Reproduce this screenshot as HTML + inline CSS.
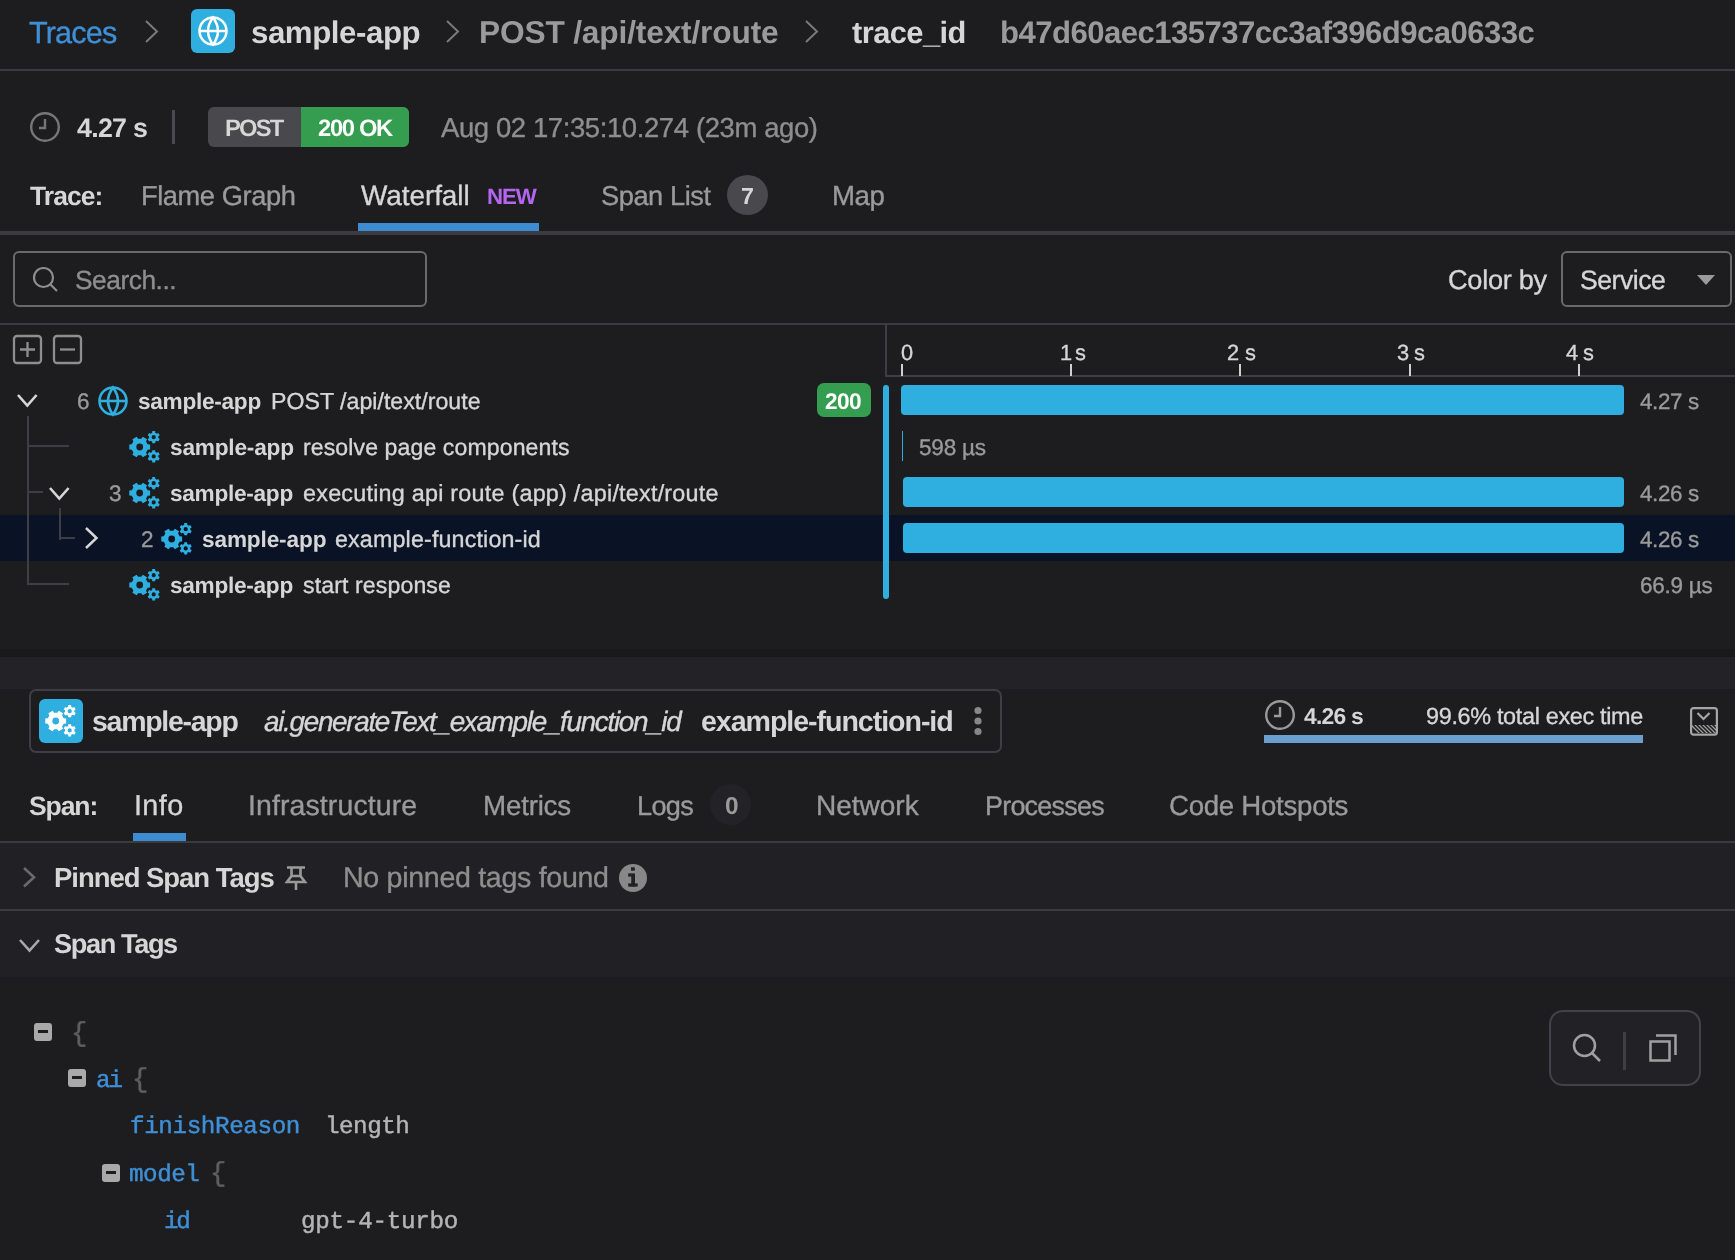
<!DOCTYPE html>
<html><head><meta charset="utf-8"><style>
html,body{margin:0;padding:0;}
body{width:1735px;height:1260px;background:#1d1d20;position:relative;overflow:hidden;font-family:"Liberation Sans",sans-serif;}
.t{position:absolute;white-space:nowrap;will-change:transform;text-rendering:geometricPrecision;}
svg{overflow:visible}
</style></head><body>
<div class="t" style="left:29.00px;top:17.80px;font:normal 400 30.64px/30.64px 'Liberation Sans';color:#3f8fd6;letter-spacing:-0.850px;-webkit-text-stroke:0.35px currentColor">Traces</div>
<svg style="position:absolute;left:144px;top:19px;" width="15" height="25" viewBox="0 0 15 25"><path d="M2,2 L13,12.5 L2,23" fill="none" stroke="#7a7a7a" stroke-width="2"/></svg>
<div style="position:absolute;left:191px;top:9px;width:44px;height:44px;background:#2eafe0;border-radius:6px"></div>
<svg style="position:absolute;left:191px;top:9px;" width="44" height="44" viewBox="0 0 44 44"><g fill="none" stroke="#fff" stroke-width="2.5"><circle cx="22" cy="22" r="13.5"/><path d="M22,8.5 Q12,22 22,35.5 Q32,22 22,8.5Z"/><line x1="8.5" y1="22" x2="35.5" y2="22"/></g></svg>
<div class="t" style="left:251.00px;top:17.21px;font:normal 700 31.26px/31.26px 'Liberation Sans';color:#d6d6d6;letter-spacing:-0.450px">sample-app</div>
<svg style="position:absolute;left:445px;top:19px;" width="15" height="25" viewBox="0 0 15 25"><path d="M2,2 L13,12.5 L2,23" fill="none" stroke="#7a7a7a" stroke-width="2"/></svg>
<div class="t" style="left:478.70px;top:16.90px;font:normal 700 31.70px/31.70px 'Liberation Sans';color:#9a9a9a;letter-spacing:-0.168px">POST /api/text/route</div>
<svg style="position:absolute;left:804px;top:19px;" width="15" height="25" viewBox="0 0 15 25"><path d="M2,2 L13,12.5 L2,23" fill="none" stroke="#7a7a7a" stroke-width="2"/></svg>
<div class="t" style="left:852.00px;top:17.92px;font:normal 700 30.85px/30.85px 'Liberation Sans';color:#d6d6d6;letter-spacing:-0.571px">trace_id</div>
<div class="t" style="left:1000.00px;top:16.91px;font:normal 700 31.13px/31.13px 'Liberation Sans';color:#9a9a9a;letter-spacing:-0.556px">b47d60aec135737cc3af396d9ca0633c</div>
<div style="position:absolute;left:0px;top:69px;width:1735px;height:2px;background:#3b3b3f;"></div>
<svg style="position:absolute;left:29px;top:111px;" width="32" height="32" viewBox="0 0 32 32"><g fill="none" stroke="#777777" stroke-width="2.4"><circle cx="16" cy="16" r="13.8"/><path d="M16,8 V17 H10"/></g></svg>
<div class="t" style="left:77.00px;top:115.40px;font:normal 700 26.83px/26.83px 'Liberation Sans';color:#d6d6d6;letter-spacing:-0.740px">4.27 s</div>
<div style="position:absolute;left:172px;top:110px;width:3px;height:34px;background:#4a4a4e;"></div>
<div style="position:absolute;left:208px;top:107px;width:201px;height:40px;background:#48484d;border-radius:6px"></div>
<div style="position:absolute;left:301px;top:107px;width:108px;height:40px;background:#359d50;border-radius:0 6px 6px 0"></div>
<div class="t" style="left:225.30px;top:117.21px;font:normal 700 23.75px/23.75px 'Liberation Sans';color:#d6d6d6;letter-spacing:-1.817px">POST</div>
<div class="t" style="left:317.70px;top:117.21px;font:normal 700 23.76px/23.76px 'Liberation Sans';color:#ffffff;letter-spacing:-1.330px">200 OK</div>
<div class="t" style="left:441.00px;top:114.41px;font:normal 400 27.46px/27.46px 'Liberation Sans';color:#8e8e8e;letter-spacing:-0.384px;-webkit-text-stroke:0.35px currentColor">Aug 02 17:35:10.274 (23m ago)</div>
<div class="t" style="left:30.00px;top:183.21px;font:normal 700 26.48px/26.48px 'Liberation Sans';color:#d6d6d6;letter-spacing:-0.920px">Trace:</div>
<div class="t" style="left:140.80px;top:182.20px;font:normal 400 27.28px/27.28px 'Liberation Sans';color:#9a9a9a;letter-spacing:-0.430px;-webkit-text-stroke:0.35px currentColor">Flame Graph</div>
<div class="t" style="left:360.80px;top:182.22px;font:normal 400 27.96px/27.96px 'Liberation Sans';color:#d6d6d6;letter-spacing:-0.075px;-webkit-text-stroke:0.35px currentColor">Waterfall</div>
<div class="t" style="left:486.90px;top:185.70px;font:normal 700 22.29px/22.29px 'Liberation Sans';color:#b466f0;letter-spacing:-1.100px">NEW</div>
<div class="t" style="left:601.00px;top:182.21px;font:normal 400 27.22px/27.22px 'Liberation Sans';color:#9a9a9a;letter-spacing:-0.438px;-webkit-text-stroke:0.35px currentColor">Span List</div>
<div style="position:absolute;left:727px;top:175px;width:41px;height:40px;background:#48484d;border-radius:50%"></div>
<div class="t" style="left:741.00px;top:184.52px;font:normal 700 23.26px/23.26px 'Liberation Sans';color:#d6d6d6;letter-spacing:0.000px">7</div>
<div class="t" style="left:832.00px;top:182.21px;font:normal 400 27.65px/27.65px 'Liberation Sans';color:#9a9a9a;letter-spacing:-0.500px;-webkit-text-stroke:0.35px currentColor">Map</div>
<div style="position:absolute;left:358px;top:223px;width:181px;height:8px;background:#3d8bd1;"></div>
<div style="position:absolute;left:0px;top:231px;width:1735px;height:4px;background:#3c3b40;"></div>
<div style="position:absolute;left:13px;top:251px;width:414px;height:56px;background:transparent;box-sizing:border-box;border:2px solid #6a6a6d;border-radius:6px"></div>
<svg style="position:absolute;left:31px;top:265px;" width="30" height="30" viewBox="0 0 30 30"><g fill="none" stroke="#8e8e8e" stroke-width="2.2"><circle cx="12.5" cy="12.5" r="9.5"/><line x1="19.5" y1="19.5" x2="26" y2="26"/></g></svg>
<div class="t" style="left:75.30px;top:266.71px;font:normal 400 26.27px/26.27px 'Liberation Sans';color:#8e8e8e;letter-spacing:-0.437px;-webkit-text-stroke:0.35px currentColor">Search...</div>
<div class="t" style="left:1447.60px;top:266.01px;font:normal 400 27.16px/27.16px 'Liberation Sans';color:#d6d6d6;letter-spacing:-0.286px;-webkit-text-stroke:0.35px currentColor">Color by</div>
<div style="position:absolute;left:1561px;top:251px;width:171px;height:56px;background:transparent;box-sizing:border-box;border:2px solid #6a6a6d;border-radius:6px"></div>
<div class="t" style="left:1579.80px;top:267.00px;font:normal 400 26.60px/26.60px 'Liberation Sans';color:#d6d6d6;letter-spacing:-0.492px;-webkit-text-stroke:0.35px currentColor">Service</div>
<svg style="position:absolute;left:1696px;top:275px;" width="20" height="11" viewBox="0 0 20 11"><path d="M1,0 H19 L10,10Z" fill="#9a9a9a"/></svg>
<div style="position:absolute;left:0px;top:323px;width:1735px;height:2px;background:#3b3b3f;"></div>
<svg style="position:absolute;left:12px;top:334px;" width="31" height="31" viewBox="0 0 31 31"><g fill="none" stroke="#8e8e8e" stroke-width="2.3"><rect x="2" y="2" width="27" height="27" rx="3"/><path d="M15.5,8 V23 M8,15.5 H23"/></g></svg>
<svg style="position:absolute;left:52px;top:334px;" width="31" height="31" viewBox="0 0 31 31"><g fill="none" stroke="#8e8e8e" stroke-width="2.3"><rect x="2" y="2" width="27" height="27" rx="3"/><path d="M8,15.5 H23"/></g></svg>
<div style="position:absolute;left:885px;top:323px;width:2px;height:54px;background:#3f3f43;"></div>
<div style="position:absolute;left:885px;top:375px;width:850px;height:2px;background:#3f3f43;"></div>
<div style="position:absolute;left:901px;top:364px;width:2px;height:12px;background:#d0d0d0;"></div>
<div class="t" style="left:901.00px;top:342.01px;font:normal 400 21.80px/21.80px 'Liberation Sans';color:#d6d6d6;letter-spacing:0.000px;-webkit-text-stroke:0.35px currentColor">0</div>
<div style="position:absolute;left:1070px;top:364px;width:2px;height:12px;background:#d0d0d0;"></div>
<div class="t" style="left:1059.90px;top:342.01px;font:normal 400 21.80px/21.80px 'Liberation Sans';color:#d6d6d6;letter-spacing:0.000px;-webkit-text-stroke:0.35px currentColor">1</div>
<div class="t" style="left:1075.10px;top:342.01px;font:normal 400 21.80px/21.80px 'Liberation Sans';color:#d6d6d6;letter-spacing:0.000px;-webkit-text-stroke:0.35px currentColor">s</div>
<div style="position:absolute;left:1239px;top:364px;width:2px;height:12px;background:#d0d0d0;"></div>
<div class="t" style="left:1227.20px;top:342.01px;font:normal 400 21.80px/21.80px 'Liberation Sans';color:#d6d6d6;letter-spacing:0.000px;-webkit-text-stroke:0.35px currentColor">2</div>
<div class="t" style="left:1244.50px;top:342.01px;font:normal 400 21.80px/21.80px 'Liberation Sans';color:#d6d6d6;letter-spacing:0.000px;-webkit-text-stroke:0.35px currentColor">s</div>
<div style="position:absolute;left:1409px;top:364px;width:2px;height:12px;background:#d0d0d0;"></div>
<div class="t" style="left:1396.60px;top:342.01px;font:normal 400 21.80px/21.80px 'Liberation Sans';color:#d6d6d6;letter-spacing:0.000px;-webkit-text-stroke:0.35px currentColor">3</div>
<div class="t" style="left:1413.90px;top:342.01px;font:normal 400 21.80px/21.80px 'Liberation Sans';color:#d6d6d6;letter-spacing:0.000px;-webkit-text-stroke:0.35px currentColor">s</div>
<div style="position:absolute;left:1578px;top:364px;width:2px;height:12px;background:#d0d0d0;"></div>
<div class="t" style="left:1566.00px;top:342.01px;font:normal 400 21.80px/21.80px 'Liberation Sans';color:#d6d6d6;letter-spacing:0.000px;-webkit-text-stroke:0.35px currentColor">4</div>
<div class="t" style="left:1583.30px;top:342.01px;font:normal 400 21.80px/21.80px 'Liberation Sans';color:#d6d6d6;letter-spacing:0.000px;-webkit-text-stroke:0.35px currentColor">s</div>
<div style="position:absolute;left:0px;top:515px;width:1735px;height:46px;background:#091325;"></div>
<div style="position:absolute;left:27px;top:416px;width:2px;height:169px;background:#3f3e43;"></div>
<div style="position:absolute;left:27px;top:445px;width:42px;height:2px;background:#3f3e43;"></div>
<div style="position:absolute;left:27px;top:491px;width:16px;height:2px;background:#3f3e43;"></div>
<div style="position:absolute;left:59px;top:508px;width:2px;height:32px;background:#3f3e43;"></div>
<div style="position:absolute;left:59px;top:537px;width:16px;height:2px;background:#3f3e43;"></div>
<div style="position:absolute;left:27px;top:583px;width:42px;height:2px;background:#3f3e43;"></div>
<svg style="position:absolute;left:15.8px;top:393.4px;" width="22.6" height="14.5" viewBox="0 0 22.6 14.5"><path d="M2,2 L11.3,12.5 L20.6,2" fill="none" stroke="#d6d6d6" stroke-width="2.6"/></svg>
<svg style="position:absolute;left:47.8px;top:486.0px;" width="22.6" height="14.5" viewBox="0 0 22.6 14.5"><path d="M2,2 L11.3,12.5 L20.6,2" fill="none" stroke="#d6d6d6" stroke-width="2.6"/></svg>
<svg style="position:absolute;left:84px;top:526px;" width="14.5" height="24" viewBox="0 0 14.5 24"><path d="M2,2 L12.5,12.0 L2,22" fill="none" stroke="#d6d6d6" stroke-width="2.5"/></svg>
<div class="t" style="left:77.00px;top:390.90px;font:normal 400 22.53px/22.53px 'Liberation Sans';color:#9a9a9a;letter-spacing:0.000px;-webkit-text-stroke:0.35px currentColor">6</div>
<svg style="position:absolute;left:97px;top:385px;" width="32" height="32" viewBox="0 0 32 32"><g fill="none" stroke="#2eafe0" stroke-width="2.6"><circle cx="16" cy="16" r="13.5"/><path d="M16,2.5 Q6,16 16,29.5 Q26,16 16,2.5Z"/><line x1="2.5" y1="16" x2="29.5" y2="16"/></g></svg>
<div class="t" style="left:137.50px;top:390.90px;font:normal 700 22.64px/22.64px 'Liberation Sans';color:#d6d6d6;letter-spacing:-0.278px">sample-app</div>
<div class="t" style="left:270.70px;top:389.91px;font:normal 400 23.13px/23.13px 'Liberation Sans';color:#d6d6d6;letter-spacing:0.024px;-webkit-text-stroke:0.35px currentColor">POST /api/text/route</div>
<div style="position:absolute;left:817px;top:383px;width:54px;height:34px;background:#359d50;border-radius:7px"></div>
<div class="t" style="left:825.30px;top:389.90px;font:normal 700 22.66px/22.66px 'Liberation Sans';color:#ffffff;letter-spacing:-0.600px">200</div>
<svg style="position:absolute;left:129px;top:430px;" width="33" height="34" viewBox="0 0 33 34"><path fill="#2eafe0" fill-rule="evenodd" d="M18.64,14.27 L21.12,14.56 L21.12,19.44 L18.64,19.73 L17.04,22.51 L18.02,24.80 L13.79,27.24 L12.31,25.24 L9.09,25.24 L7.61,27.24 L3.38,24.80 L4.36,22.51 L2.76,19.73 L0.28,19.44 L0.28,14.56 L2.76,14.27 L4.36,11.49 L3.38,9.20 L7.61,6.76 L9.09,8.76 L12.31,8.76 L13.79,6.76 L18.02,9.20 L17.04,11.49Z M14.10,17.00 a3.4,3.4 0 1,0 -6.80,0 a3.4,3.4 0 1,0 6.80,0Z M23.17,2.76 L23.26,1.07 L26.14,1.07 L26.23,2.76 L27.79,3.65 L29.29,2.89 L30.73,5.38 L29.31,6.30 L29.31,8.10 L30.73,9.02 L29.29,11.51 L27.79,10.75 L26.23,11.64 L26.14,13.33 L23.26,13.33 L23.17,11.64 L21.61,10.75 L20.11,11.51 L18.67,9.02 L20.09,8.10 L20.09,6.30 L18.67,5.38 L20.11,2.89 L21.61,3.65Z M26.80,7.20 a2.1,2.1 0 1,0 -4.20,0 a2.1,2.1 0 1,0 4.20,0Z M23.17,21.96 L23.26,20.27 L26.14,20.27 L26.23,21.96 L27.79,22.85 L29.29,22.09 L30.73,24.58 L29.31,25.50 L29.31,27.30 L30.73,28.22 L29.29,30.71 L27.79,29.95 L26.23,30.84 L26.14,32.53 L23.26,32.53 L23.17,30.84 L21.61,29.95 L20.11,30.71 L18.67,28.22 L20.09,27.30 L20.09,25.50 L18.67,24.58 L20.11,22.09 L21.61,22.85Z M26.80,26.40 a2.1,2.1 0 1,0 -4.20,0 a2.1,2.1 0 1,0 4.20,0Z"/></svg>
<div class="t" style="left:169.50px;top:436.00px;font:normal 700 22.68px/22.68px 'Liberation Sans';color:#d6d6d6;letter-spacing:-0.222px">sample-app</div>
<div class="t" style="left:302.70px;top:436.01px;font:normal 400 23.08px/23.08px 'Liberation Sans';color:#d6d6d6;letter-spacing:0.100px;-webkit-text-stroke:0.35px currentColor">resolve page components</div>
<div class="t" style="left:108.80px;top:483.01px;font:normal 400 22.53px/22.53px 'Liberation Sans';color:#9a9a9a;letter-spacing:0.000px;-webkit-text-stroke:0.35px currentColor">3</div>
<svg style="position:absolute;left:129px;top:476px;" width="33" height="34" viewBox="0 0 33 34"><path fill="#2eafe0" fill-rule="evenodd" d="M18.64,14.27 L21.12,14.56 L21.12,19.44 L18.64,19.73 L17.04,22.51 L18.02,24.80 L13.79,27.24 L12.31,25.24 L9.09,25.24 L7.61,27.24 L3.38,24.80 L4.36,22.51 L2.76,19.73 L0.28,19.44 L0.28,14.56 L2.76,14.27 L4.36,11.49 L3.38,9.20 L7.61,6.76 L9.09,8.76 L12.31,8.76 L13.79,6.76 L18.02,9.20 L17.04,11.49Z M14.10,17.00 a3.4,3.4 0 1,0 -6.80,0 a3.4,3.4 0 1,0 6.80,0Z M23.17,2.76 L23.26,1.07 L26.14,1.07 L26.23,2.76 L27.79,3.65 L29.29,2.89 L30.73,5.38 L29.31,6.30 L29.31,8.10 L30.73,9.02 L29.29,11.51 L27.79,10.75 L26.23,11.64 L26.14,13.33 L23.26,13.33 L23.17,11.64 L21.61,10.75 L20.11,11.51 L18.67,9.02 L20.09,8.10 L20.09,6.30 L18.67,5.38 L20.11,2.89 L21.61,3.65Z M26.80,7.20 a2.1,2.1 0 1,0 -4.20,0 a2.1,2.1 0 1,0 4.20,0Z M23.17,21.96 L23.26,20.27 L26.14,20.27 L26.23,21.96 L27.79,22.85 L29.29,22.09 L30.73,24.58 L29.31,25.50 L29.31,27.30 L30.73,28.22 L29.29,30.71 L27.79,29.95 L26.23,30.84 L26.14,32.53 L23.26,32.53 L23.17,30.84 L21.61,29.95 L20.11,30.71 L18.67,28.22 L20.09,27.30 L20.09,25.50 L18.67,24.58 L20.11,22.09 L21.61,22.85Z M26.80,26.40 a2.1,2.1 0 1,0 -4.20,0 a2.1,2.1 0 1,0 4.20,0Z"/></svg>
<div class="t" style="left:169.50px;top:483.01px;font:normal 700 22.64px/22.64px 'Liberation Sans';color:#d6d6d6;letter-spacing:-0.278px">sample-app</div>
<div class="t" style="left:302.80px;top:482.00px;font:normal 400 23.37px/23.37px 'Liberation Sans';color:#d6d6d6;letter-spacing:0.227px;-webkit-text-stroke:0.35px currentColor">executing api route (app) /api/text/route</div>
<div class="t" style="left:140.60px;top:529.01px;font:normal 400 22.53px/22.53px 'Liberation Sans';color:#9a9a9a;letter-spacing:0.000px;-webkit-text-stroke:0.35px currentColor">2</div>
<svg style="position:absolute;left:161px;top:522px;" width="33" height="34" viewBox="0 0 33 34"><path fill="#2eafe0" fill-rule="evenodd" d="M18.64,14.27 L21.12,14.56 L21.12,19.44 L18.64,19.73 L17.04,22.51 L18.02,24.80 L13.79,27.24 L12.31,25.24 L9.09,25.24 L7.61,27.24 L3.38,24.80 L4.36,22.51 L2.76,19.73 L0.28,19.44 L0.28,14.56 L2.76,14.27 L4.36,11.49 L3.38,9.20 L7.61,6.76 L9.09,8.76 L12.31,8.76 L13.79,6.76 L18.02,9.20 L17.04,11.49Z M14.10,17.00 a3.4,3.4 0 1,0 -6.80,0 a3.4,3.4 0 1,0 6.80,0Z M23.17,2.76 L23.26,1.07 L26.14,1.07 L26.23,2.76 L27.79,3.65 L29.29,2.89 L30.73,5.38 L29.31,6.30 L29.31,8.10 L30.73,9.02 L29.29,11.51 L27.79,10.75 L26.23,11.64 L26.14,13.33 L23.26,13.33 L23.17,11.64 L21.61,10.75 L20.11,11.51 L18.67,9.02 L20.09,8.10 L20.09,6.30 L18.67,5.38 L20.11,2.89 L21.61,3.65Z M26.80,7.20 a2.1,2.1 0 1,0 -4.20,0 a2.1,2.1 0 1,0 4.20,0Z M23.17,21.96 L23.26,20.27 L26.14,20.27 L26.23,21.96 L27.79,22.85 L29.29,22.09 L30.73,24.58 L29.31,25.50 L29.31,27.30 L30.73,28.22 L29.29,30.71 L27.79,29.95 L26.23,30.84 L26.14,32.53 L23.26,32.53 L23.17,30.84 L21.61,29.95 L20.11,30.71 L18.67,28.22 L20.09,27.30 L20.09,25.50 L18.67,24.58 L20.11,22.09 L21.61,22.85Z M26.80,26.40 a2.1,2.1 0 1,0 -4.20,0 a2.1,2.1 0 1,0 4.20,0Z"/></svg>
<div class="t" style="left:201.70px;top:529.01px;font:normal 700 22.62px/22.62px 'Liberation Sans';color:#d6d6d6;letter-spacing:-0.133px">sample-app</div>
<div class="t" style="left:335.00px;top:528.01px;font:normal 400 23.27px/23.27px 'Liberation Sans';color:#d6d6d6;letter-spacing:0.150px;-webkit-text-stroke:0.35px currentColor">example-function-id</div>
<svg style="position:absolute;left:129px;top:568px;" width="33" height="34" viewBox="0 0 33 34"><path fill="#2eafe0" fill-rule="evenodd" d="M18.64,14.27 L21.12,14.56 L21.12,19.44 L18.64,19.73 L17.04,22.51 L18.02,24.80 L13.79,27.24 L12.31,25.24 L9.09,25.24 L7.61,27.24 L3.38,24.80 L4.36,22.51 L2.76,19.73 L0.28,19.44 L0.28,14.56 L2.76,14.27 L4.36,11.49 L3.38,9.20 L7.61,6.76 L9.09,8.76 L12.31,8.76 L13.79,6.76 L18.02,9.20 L17.04,11.49Z M14.10,17.00 a3.4,3.4 0 1,0 -6.80,0 a3.4,3.4 0 1,0 6.80,0Z M23.17,2.76 L23.26,1.07 L26.14,1.07 L26.23,2.76 L27.79,3.65 L29.29,2.89 L30.73,5.38 L29.31,6.30 L29.31,8.10 L30.73,9.02 L29.29,11.51 L27.79,10.75 L26.23,11.64 L26.14,13.33 L23.26,13.33 L23.17,11.64 L21.61,10.75 L20.11,11.51 L18.67,9.02 L20.09,8.10 L20.09,6.30 L18.67,5.38 L20.11,2.89 L21.61,3.65Z M26.80,7.20 a2.1,2.1 0 1,0 -4.20,0 a2.1,2.1 0 1,0 4.20,0Z M23.17,21.96 L23.26,20.27 L26.14,20.27 L26.23,21.96 L27.79,22.85 L29.29,22.09 L30.73,24.58 L29.31,25.50 L29.31,27.30 L30.73,28.22 L29.29,30.71 L27.79,29.95 L26.23,30.84 L26.14,32.53 L23.26,32.53 L23.17,30.84 L21.61,29.95 L20.11,30.71 L18.67,28.22 L20.09,27.30 L20.09,25.50 L18.67,24.58 L20.11,22.09 L21.61,22.85Z M26.80,26.40 a2.1,2.1 0 1,0 -4.20,0 a2.1,2.1 0 1,0 4.20,0Z"/></svg>
<div class="t" style="left:169.50px;top:575.10px;font:normal 700 22.64px/22.64px 'Liberation Sans';color:#d6d6d6;letter-spacing:-0.278px">sample-app</div>
<div class="t" style="left:302.80px;top:574.11px;font:normal 400 23.10px/23.10px 'Liberation Sans';color:#d6d6d6;letter-spacing:0.119px;-webkit-text-stroke:0.35px currentColor">start response</div>
<div style="position:absolute;left:883px;top:385px;width:6px;height:214px;background:#2eafe0;border-radius:3px"></div>
<div style="position:absolute;left:901px;top:385px;width:723px;height:30px;background:#2eafe0;border-radius:4px"></div>
<div style="position:absolute;left:902px;top:431px;width:1px;height:30px;background:#2eafe0;"></div>
<div class="t" style="left:919.10px;top:437.01px;font:normal 400 22.55px/22.55px 'Liberation Sans';color:#9a9a9a;letter-spacing:-0.220px;-webkit-text-stroke:0.35px currentColor">598 µs</div>
<div style="position:absolute;left:903px;top:477px;width:721px;height:30px;background:#2eafe0;border-radius:4px"></div>
<div style="position:absolute;left:903px;top:523px;width:721px;height:30px;background:#2eafe0;border-radius:4px"></div>
<div class="t" style="left:1639.80px;top:390.92px;font:normal 400 22.38px/22.38px 'Liberation Sans';color:#9a9a9a;letter-spacing:-0.370px;-webkit-text-stroke:0.35px currentColor">4.27 s</div>
<div class="t" style="left:1639.80px;top:483.01px;font:normal 400 22.38px/22.38px 'Liberation Sans';color:#9a9a9a;letter-spacing:-0.370px;-webkit-text-stroke:0.35px currentColor">4.26 s</div>
<div class="t" style="left:1639.80px;top:529.01px;font:normal 400 22.38px/22.38px 'Liberation Sans';color:#9a9a9a;letter-spacing:-0.370px;-webkit-text-stroke:0.35px currentColor">4.26 s</div>
<div class="t" style="left:1640.30px;top:575.11px;font:normal 400 22.50px/22.50px 'Liberation Sans';color:#9a9a9a;letter-spacing:-0.258px;-webkit-text-stroke:0.35px currentColor">66.9 µs</div>
<div style="position:absolute;left:0px;top:649px;width:1735px;height:8px;background:#19191c;"></div>
<div style="position:absolute;left:0px;top:657px;width:1735px;height:32px;background:#222227;"></div>
<div style="position:absolute;left:29px;top:689px;width:973px;height:64px;background:transparent;box-sizing:border-box;border:2px solid #3f3e43;border-radius:7px"></div>
<div style="position:absolute;left:39px;top:699px;width:44px;height:44px;background:#2eafe0;border-radius:6px"></div>
<svg style="position:absolute;left:44.7px;top:704px;" width="33" height="34" viewBox="0 0 33 34"><path fill="#ffffff" fill-rule="evenodd" d="M18.64,14.27 L21.12,14.56 L21.12,19.44 L18.64,19.73 L17.04,22.51 L18.02,24.80 L13.79,27.24 L12.31,25.24 L9.09,25.24 L7.61,27.24 L3.38,24.80 L4.36,22.51 L2.76,19.73 L0.28,19.44 L0.28,14.56 L2.76,14.27 L4.36,11.49 L3.38,9.20 L7.61,6.76 L9.09,8.76 L12.31,8.76 L13.79,6.76 L18.02,9.20 L17.04,11.49Z M14.10,17.00 a3.4,3.4 0 1,0 -6.80,0 a3.4,3.4 0 1,0 6.80,0Z M23.17,2.76 L23.26,1.07 L26.14,1.07 L26.23,2.76 L27.79,3.65 L29.29,2.89 L30.73,5.38 L29.31,6.30 L29.31,8.10 L30.73,9.02 L29.29,11.51 L27.79,10.75 L26.23,11.64 L26.14,13.33 L23.26,13.33 L23.17,11.64 L21.61,10.75 L20.11,11.51 L18.67,9.02 L20.09,8.10 L20.09,6.30 L18.67,5.38 L20.11,2.89 L21.61,3.65Z M26.80,7.20 a2.1,2.1 0 1,0 -4.20,0 a2.1,2.1 0 1,0 4.20,0Z M23.17,21.96 L23.26,20.27 L26.14,20.27 L26.23,21.96 L27.79,22.85 L29.29,22.09 L30.73,24.58 L29.31,25.50 L29.31,27.30 L30.73,28.22 L29.29,30.71 L27.79,29.95 L26.23,30.84 L26.14,32.53 L23.26,32.53 L23.17,30.84 L21.61,29.95 L20.11,30.71 L18.67,28.22 L20.09,27.30 L20.09,25.50 L18.67,24.58 L20.11,22.09 L21.61,22.85Z M26.80,26.40 a2.1,2.1 0 1,0 -4.20,0 a2.1,2.1 0 1,0 4.20,0Z"/></svg>
<div class="t" style="left:91.60px;top:708.21px;font:normal 700 28.49px/28.49px 'Liberation Sans';color:#d6d6d6;letter-spacing:-1.278px">sample-app</div>
<div class="t" style="left:263.70px;top:708.21px;font:italic 400 27.91px/27.91px 'Liberation Sans';color:#d6d6d6;letter-spacing:-1.326px;-webkit-text-stroke:0.35px currentColor">ai.generateText_example_function_id</div>
<div class="t" style="left:700.80px;top:708.21px;font:normal 700 28.63px/28.63px 'Liberation Sans';color:#d6d6d6;letter-spacing:-1.069px">example-function-id</div>
<svg style="position:absolute;left:971px;top:704px;" width="14" height="34" viewBox="0 0 14 34"><g fill="#888888"><circle cx="7" cy="6.5" r="3.6"/><circle cx="7" cy="17" r="3.6"/><circle cx="7" cy="27.5" r="3.6"/></g></svg>
<svg style="position:absolute;left:1264px;top:699px;" width="32" height="32" viewBox="0 0 32 32"><g fill="none" stroke="#9a9a9a" stroke-width="2.4"><circle cx="16" cy="16" r="13.8"/><path d="M16,8 V17 H10"/></g></svg>
<div class="t" style="left:1303.70px;top:705.01px;font:normal 700 22.89px/22.89px 'Liberation Sans';color:#d6d6d6;letter-spacing:-0.760px">4.26 s</div>
<div class="t" style="left:1425.50px;top:705.00px;font:normal 400 23.46px/23.46px 'Liberation Sans';color:#d6d6d6;letter-spacing:-0.348px;-webkit-text-stroke:0.35px currentColor">99.6% total exec time</div>
<div style="position:absolute;left:1264px;top:735px;width:379px;height:8px;background:#6a9fd0;"></div>
<svg style="position:absolute;left:1689px;top:706px;" width="30" height="30" viewBox="0 0 30 30"><defs><clipPath id="cp"><rect x="3" y="19" width="24" height="8"/></clipPath></defs><g fill="none" stroke="#a6a6a6" stroke-width="2.2"><rect x="2.1" y="2.1" width="25.8" height="26.6" rx="2.5"/><path d="M8.5,7 L14.5,13 L20.5,7"/></g><g clip-path="url(#cp)" stroke="#a0a0a0" stroke-width="1.3"><path d="M0,17 L12,29 M4,17 L16,29 M8,17 L20,29 M12,17 L24,29 M16,17 L28,29 M20,17 L32,29 M24,17 L36,29"/></g></svg>
<div class="t" style="left:29.40px;top:793.00px;font:normal 700 26.54px/26.54px 'Liberation Sans';color:#d6d6d6;letter-spacing:-1.100px">Span:</div>
<div class="t" style="left:134.20px;top:792.01px;font:normal 400 28.82px/28.82px 'Liberation Sans';color:#d6d6d6;letter-spacing:0.367px;-webkit-text-stroke:0.35px currentColor">Info</div>
<div style="position:absolute;left:133px;top:833px;width:53px;height:8px;background:#3d8bd1;"></div>
<div class="t" style="left:248.30px;top:792.01px;font:normal 400 28.47px/28.47px 'Liberation Sans';color:#9a9a9a;letter-spacing:0.108px;-webkit-text-stroke:0.35px currentColor">Infrastructure</div>
<div class="t" style="left:483.40px;top:792.01px;font:normal 400 27.78px/27.78px 'Liberation Sans';color:#9a9a9a;letter-spacing:-0.217px;-webkit-text-stroke:0.35px currentColor">Metrics</div>
<div class="t" style="left:637.00px;top:792.01px;font:normal 400 27.11px/27.11px 'Liberation Sans';color:#9a9a9a;letter-spacing:-0.700px;-webkit-text-stroke:0.35px currentColor">Logs</div>
<div style="position:absolute;left:710px;top:784px;width:41px;height:41px;background:#232327;border-radius:50%"></div>
<div class="t" style="left:724.80px;top:795.30px;font:normal 700 24.42px/24.42px 'Liberation Sans';color:#9a9a9a;letter-spacing:0.000px">0</div>
<div class="t" style="left:816.20px;top:792.00px;font:normal 400 28.09px/28.09px 'Liberation Sans';color:#9a9a9a;letter-spacing:-0.050px;-webkit-text-stroke:0.35px currentColor">Network</div>
<div class="t" style="left:984.60px;top:793.01px;font:normal 400 26.87px/26.87px 'Liberation Sans';color:#9a9a9a;letter-spacing:-0.725px;-webkit-text-stroke:0.35px currentColor">Processes</div>
<div class="t" style="left:1168.90px;top:792.00px;font:normal 400 27.61px/27.61px 'Liberation Sans';color:#9a9a9a;letter-spacing:-0.267px;-webkit-text-stroke:0.35px currentColor">Code Hotspots</div>
<div style="position:absolute;left:0px;top:841px;width:1735px;height:2px;background:#3b3b3f;"></div>
<div style="position:absolute;left:0px;top:843px;width:1735px;height:134px;background:#212125;"></div>
<div style="position:absolute;left:0px;top:909px;width:1735px;height:2px;background:#3b3b3f;"></div>
<svg style="position:absolute;left:22.3px;top:866.3px;" width="14" height="22.5" viewBox="0 0 14 22.5"><path d="M2,2 L12,11.25 L2,20.5" fill="none" stroke="#6a6a6a" stroke-width="2.6"/></svg>
<div class="t" style="left:53.70px;top:864.01px;font:normal 700 27.51px/27.51px 'Liberation Sans';color:#d6d6d6;letter-spacing:-1.043px">Pinned Span Tags</div>
<svg style="position:absolute;left:284px;top:864px;" width="24" height="28" viewBox="0 0 24 28"><g fill="none" stroke="#9a9a9a" stroke-width="2.6" stroke-linejoin="miter"><path d="M3,3.5 H21 M7.5,3.5 V12 M16.5,3.5 V12 M7.5,12 L3,18 H21 L16.5,12 Z M12,18 V26"/></g></svg>
<div class="t" style="left:342.90px;top:864.01px;font:normal 400 28.62px/28.62px 'Liberation Sans';color:#8e8e8e;letter-spacing:-0.316px;-webkit-text-stroke:0.35px currentColor">No pinned tags found</div>
<svg style="position:absolute;left:618px;top:864px;" width="30" height="30" viewBox="0 0 30 30"><circle cx="15" cy="14" r="14" fill="#888888"/><g fill="#212125"><rect x="13" y="3.3" width="3.8" height="3.4"/><rect x="13.25" y="9.4" width="3.75" height="13.2"/><rect x="10.2" y="9.4" width="3.5" height="3.2"/><rect x="10.2" y="19.4" width="9.5" height="3.2"/></g></svg>
<svg style="position:absolute;left:17.8px;top:937.5px;" width="23" height="14.5" viewBox="0 0 23 14.5"><path d="M2,2 L11.5,12.5 L21,2" fill="none" stroke="#a9a9a9" stroke-width="2.6"/></svg>
<div class="t" style="left:53.70px;top:930.20px;font:normal 700 27.18px/27.18px 'Liberation Sans';color:#d6d6d6;letter-spacing:-1.394px">Span Tags</div>
<div style="position:absolute;left:34px;top:1023px;width:18px;height:18px;background:#a9a9a9;border-radius:3px"></div>
<div style="position:absolute;left:38px;top:1030px;width:10px;height:3px;background:#1d1d20;"></div>
<div class="t" style="left:70.50px;top:1021.00px;font:normal 400 27.27px/27.27px 'Liberation Mono';color:#5e5e5e;letter-spacing:0.000px;-webkit-text-stroke:0.45px currentColor">{</div>
<div style="position:absolute;left:68px;top:1069px;width:18px;height:18px;background:#a9a9a9;border-radius:3px"></div>
<div style="position:absolute;left:72px;top:1076px;width:10px;height:3px;background:#1d1d20;"></div>
<div class="t" style="left:95.80px;top:1070.21px;font:normal 400 24.24px/24.24px 'Liberation Mono';color:#3f8fd6;letter-spacing:-2.000px;-webkit-text-stroke:0.45px currentColor">ai</div>
<div class="t" style="left:132.30px;top:1067.20px;font:normal 400 27.27px/27.27px 'Liberation Mono';color:#5e5e5e;letter-spacing:0.000px;-webkit-text-stroke:0.45px currentColor">{</div>
<div class="t" style="left:130.40px;top:1115.60px;font:normal 400 24.24px/24.24px 'Liberation Mono';color:#3f8fd6;letter-spacing:-0.373px;-webkit-text-stroke:0.45px currentColor">finishReason</div>
<div class="t" style="left:325.00px;top:1115.60px;font:normal 400 24.24px/24.24px 'Liberation Mono';color:#b5b5b5;letter-spacing:-0.490px;-webkit-text-stroke:0.45px currentColor">length</div>
<div style="position:absolute;left:102px;top:1164px;width:18px;height:18px;background:#a9a9a9;border-radius:3px"></div>
<div style="position:absolute;left:106px;top:1171px;width:10px;height:3px;background:#1d1d20;"></div>
<div class="t" style="left:129.00px;top:1164.30px;font:normal 400 24.24px/24.24px 'Liberation Mono';color:#3f8fd6;letter-spacing:-0.462px;-webkit-text-stroke:0.45px currentColor">model</div>
<div class="t" style="left:210.20px;top:1161.30px;font:normal 400 27.27px/27.27px 'Liberation Mono';color:#5e5e5e;letter-spacing:0.000px;-webkit-text-stroke:0.45px currentColor">{</div>
<div class="t" style="left:164.20px;top:1210.60px;font:normal 400 24.24px/24.24px 'Liberation Mono';color:#3f8fd6;letter-spacing:-2.300px;-webkit-text-stroke:0.45px currentColor">id</div>
<div class="t" style="left:300.80px;top:1210.60px;font:normal 400 24.24px/24.24px 'Liberation Mono';color:#b5b5b5;letter-spacing:-0.260px;-webkit-text-stroke:0.45px currentColor">gpt-4-turbo</div>
<div style="position:absolute;left:1549px;top:1010px;width:152px;height:76px;background:#222226;box-sizing:border-box;border:2px solid #434347;border-radius:14px"></div>
<svg style="position:absolute;left:1570px;top:1031px;" width="36" height="36" viewBox="0 0 36 36"><g fill="none" stroke="#a0a0a0" stroke-width="2.5"><circle cx="14.5" cy="14.5" r="10.5"/><line x1="22" y1="22" x2="30" y2="30"/></g></svg>
<div style="position:absolute;left:1623px;top:1032px;width:3px;height:38px;background:#3f3e43;"></div>
<svg style="position:absolute;left:1645px;top:1030px;" width="36" height="36" viewBox="0 0 36 36"><g fill="none" stroke="#a0a0a0" stroke-width="2.5"><rect x="5.5" y="11.5" width="19" height="19"/><path d="M11,5.5 H30.5 V25"/></g></svg>
</body></html>
